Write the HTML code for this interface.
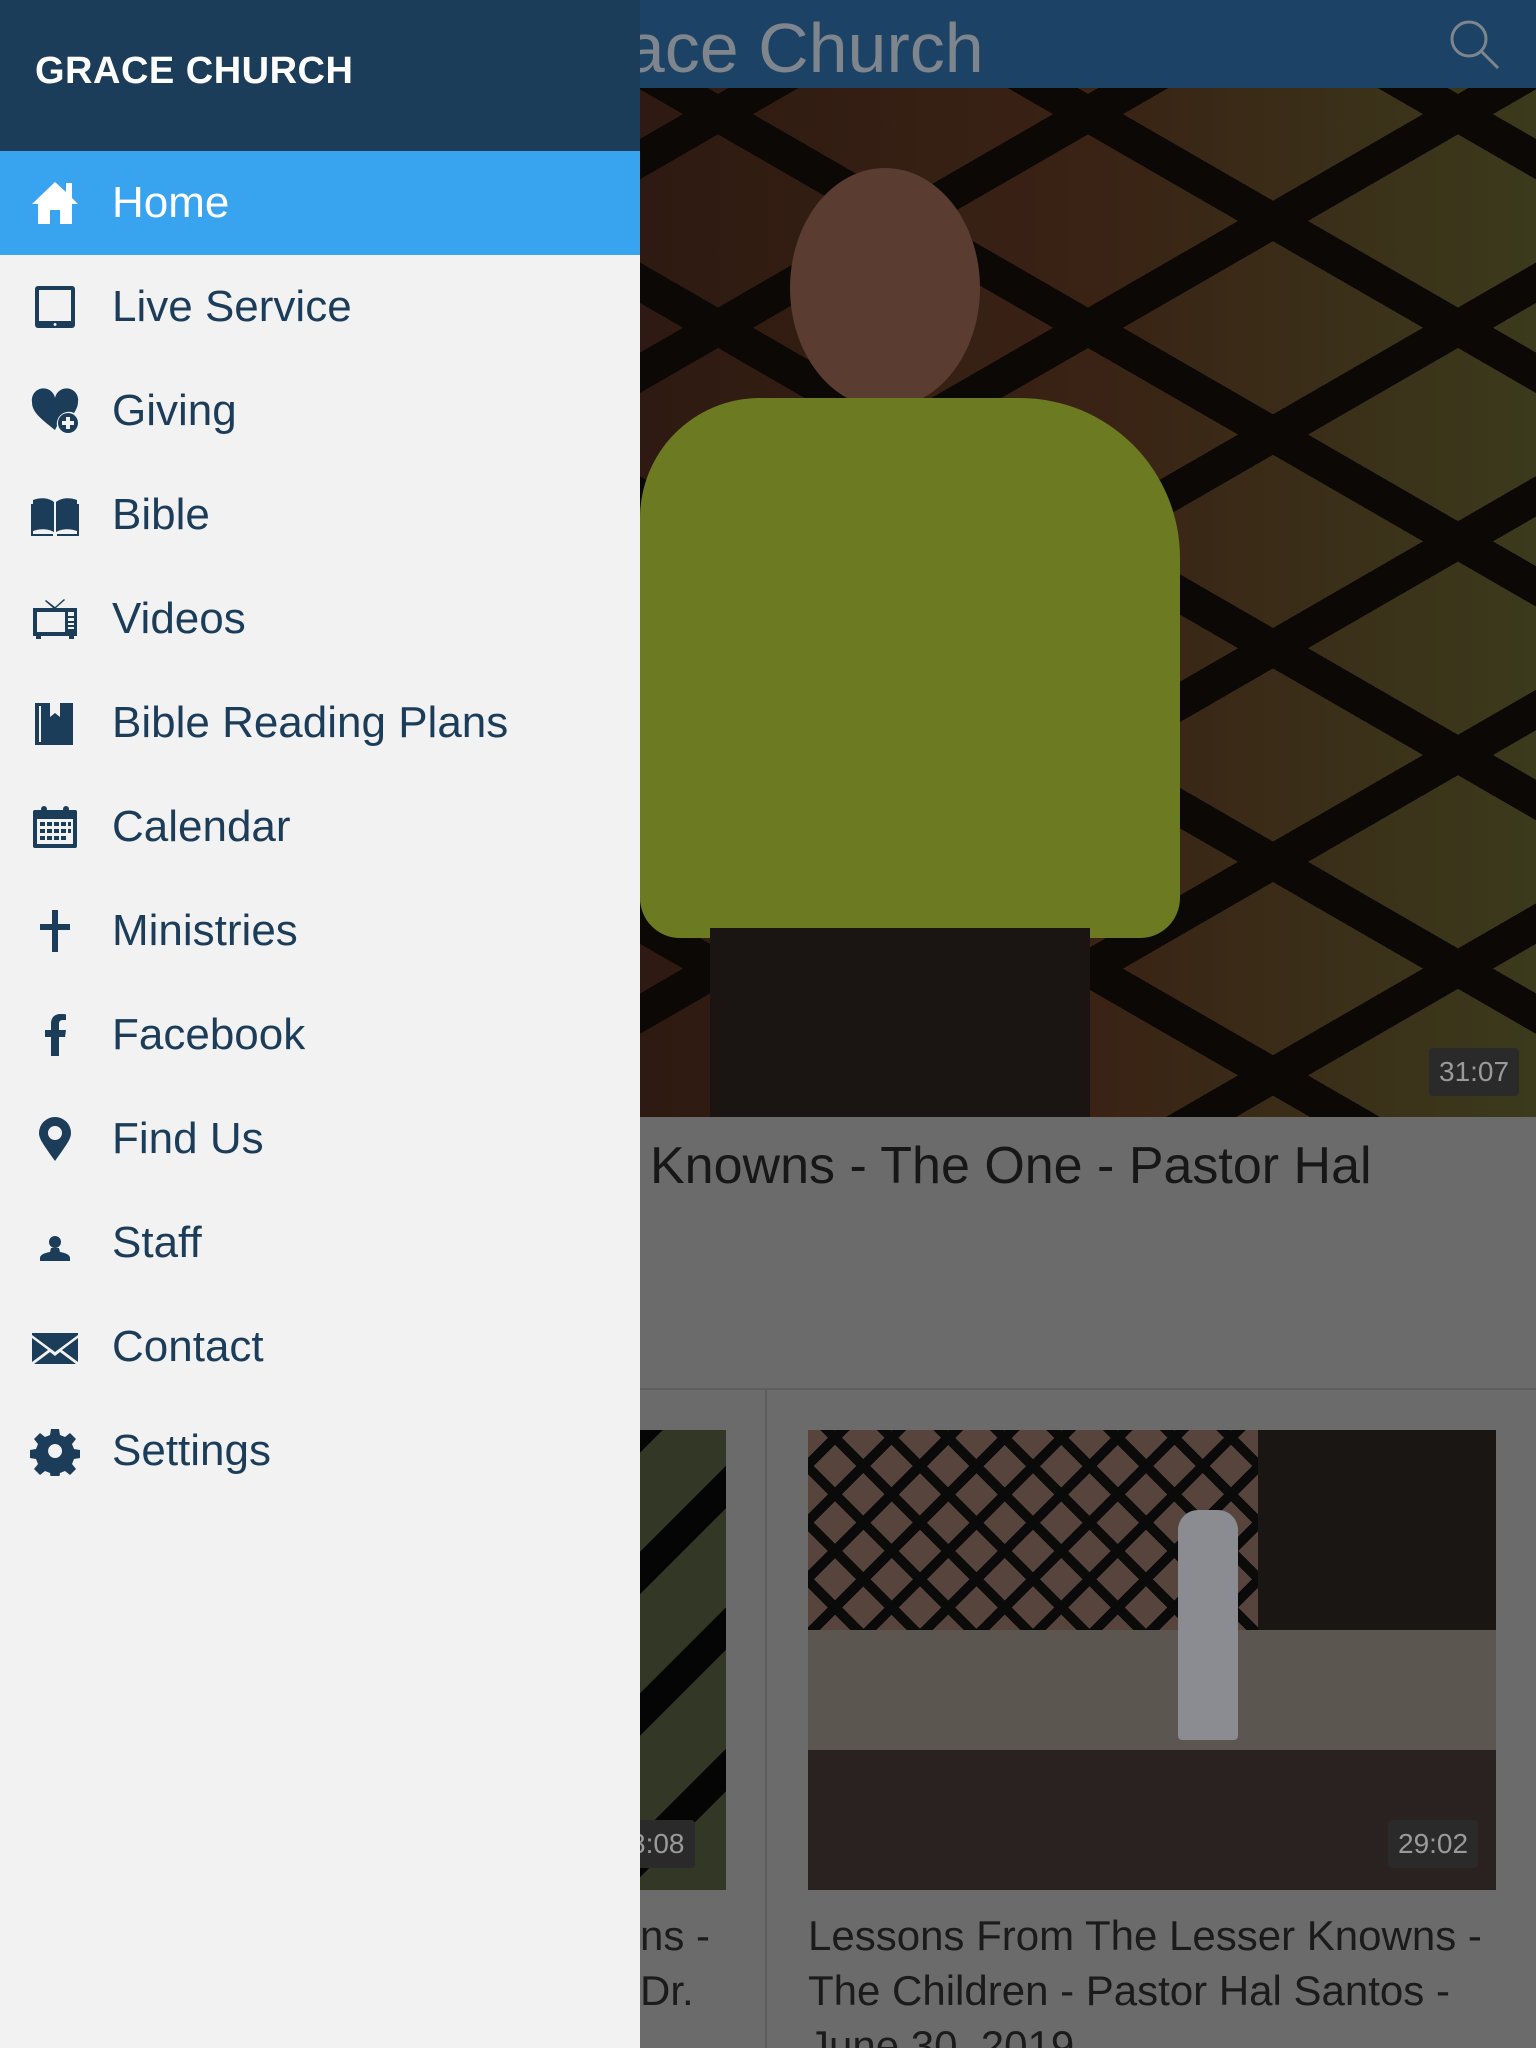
<!DOCTYPE html>
<html style="overflow:hidden;height:2048px"><head><meta charset="utf-8"><style>
*{margin:0;padding:0;box-sizing:border-box}
html,body{width:1536px;height:2048px;overflow:hidden}
body{background:#6b6b6b;font-family:"Liberation Sans",sans-serif;position:relative}
#wrap{position:absolute;left:0;top:0;width:1536px;height:2048px;overflow:hidden}
.topbar{position:absolute;left:0;top:0;width:1536px;height:88px;background:#1c4266}
.topbar .t{position:absolute;left:548px;top:8px;font-size:70px;color:#7e858c;white-space:nowrap}
.video{position:absolute;left:640px;top:88px;width:896px;height:1029px;overflow:hidden;
background:
 repeating-linear-gradient(30deg,transparent 0 150px,#0c0806 150px 185px),
 repeating-linear-gradient(-30deg,transparent 0 150px,#0c0806 150px 185px),
 linear-gradient(90deg,#2e1a12,#3a2214 50%,#3b3a1c);}
.shirt{position:absolute;left:0;top:310px;width:540px;height:540px;background:#6c7a22;border-radius:120px 160px 40px 40px}
.pants{position:absolute;left:70px;top:840px;width:380px;height:200px;background:#1a1512}
.head{position:absolute;left:150px;top:80px;width:190px;height:240px;background:#5a3c30;border-radius:50%}
.badge{position:absolute;background:#2a2a2a;color:#9a9a9a;font-size:28px;padding:8px 10px;border-radius:4px}
.h2{position:absolute;left:650px;top:1136px;font-size:52px;color:#171717;white-space:nowrap}
.hr{position:absolute;left:640px;top:1388px;width:896px;height:2px;background:#5e5e5e}
.vr{position:absolute;left:765px;top:1390px;width:2px;height:660px;background:#5e5e5e}
.thumbL{position:absolute;left:640px;top:1430px;width:86px;height:460px;
background:repeating-linear-gradient(-45deg,#333826 0 70px,#050505 70px 100px)}
.thumbR{position:absolute;left:808px;top:1430px;width:688px;height:460px;overflow:hidden;background:#1a1614}
.cap{position:absolute;font-size:42px;color:#1b1b1b;line-height:55px;white-space:nowrap}
.drawer{position:absolute;left:0;top:0;width:640px;height:2048px;background:#f2f2f2}
.dh{height:151px;background:#1c3d5a;color:#fff;font-weight:bold;font-size:38px;padding:50px 0 0 35px;letter-spacing:0.5px}
.item{height:104px;display:flex;align-items:center;color:#1c3d5a;font-size:44px}
.item.act{background:#38a3ee;color:#fff}
.ic{width:112px;display:flex;justify-content:center;padding-right:3px}
.ic svg{width:50px;height:50px;fill:currentColor}
</style></head><body><div id="wrap">
<div class="topbar"><div class="t">Grace Church</div>
<svg style="position:absolute;left:1448px;top:18px" width="52" height="52" viewBox="0 0 52 52" fill="none" stroke="#7e858c" stroke-width="3"><circle cx="21" cy="21" r="17"/><line x1="33" y1="33" x2="50" y2="50"/></svg></div>
<div class="video"><div class="head"></div><div class="shirt"></div><div class="pants"></div>
<div class="badge" style="left:789px;top:960px">31:07</div></div>
<div class="h2">Knowns - The One - Pastor Hal</div>
<div class="hr"></div><div class="vr"></div>
<div class="thumbL"><div class="badge" style="left:-20px;top:390px">8:08</div></div>
<div class="thumbR">
<div style="position:absolute;left:0;top:0;width:450px;height:200px;background:repeating-linear-gradient(45deg,#5e4a42 0 30px,#0a0a0a 30px 40px),#5a4a40;opacity:.9"></div>
<div style="position:absolute;left:0;top:0;width:450px;height:200px;background:repeating-linear-gradient(-45deg,transparent 0 30px,#0a0a0a 30px 40px)"></div>
<div style="position:absolute;left:0;top:200px;width:688px;height:120px;background:#5b5650"></div>
<div style="position:absolute;left:0;top:320px;width:688px;height:140px;background:#2a2220"></div>
<div style="position:absolute;left:370px;top:80px;width:60px;height:230px;background:#8a8c92;border-radius:20px 20px 4px 4px"></div>
<div class="badge" style="left:580px;top:390px">29:02</div></div>
<div class="cap" style="left:640px;top:1908px">ns -<br>Dr.</div>
<div class="cap" style="left:808px;top:1908px">Lessons From The Lesser Knowns -<br>The Children - Pastor Hal Santos -<br>June 30, 2019</div>

<div class="drawer">
<div class="dh">GRACE CHURCH</div>
<div class="item act"><div class="ic"><svg viewBox="0 0 50 50"><path d="M25 4 L2 26 H8 V46 H20 V32 H30 V46 H42 V26 H48 L42 20 V5 H36 V14 Z"/></svg></div>Home</div>
<div class="item"><div class="ic"><svg viewBox="0 0 50 50"><path d="M8 4h34a3 3 0 0 1 3 3v36a3 3 0 0 1-3 3H8a3 3 0 0 1-3-3V7a3 3 0 0 1 3-3zM9 8v31h32V8zM25 41a1.5 1.5 0 1 0 .1 0z" fill-rule="evenodd"/></svg></div>Live Service</div>
<div class="item"><div class="ic"><svg viewBox="0 0 50 50"><path d="M25 44 C10 32 2 26 2 16 A11 11 0 0 1 25 12 A11 11 0 0 1 48 16 C48 20 46 24 44 27 A12 12 0 0 0 27 40Z"/><circle cx="38" cy="37" r="10"/><path d="M36 31h4v4h4v4h-4v4h-4v-4h-4v-4h4z" fill="#f2f2f2"/></svg></div>Giving</div>
<div class="item"><div class="ic"><svg viewBox="0 0 50 50"><path d="M3 10c8-3 16-2 21 2v30c-5-3-13-4-21-1zM47 10c-8-3-16-2-21 2v30c5-3 13-4 21-1zM1 14h2v30h20v2H1zM49 14h-2v30H27v2h22z"/></svg></div>Bible</div>
<div class="item"><div class="ic"><svg viewBox="0 0 50 50"><path d="M3 14h44v28H3zM7 18v20h28V18zM38 18h6v4h-6zM38 24h6v3h-6zM38 29h6v2h-6zM38 33h6v2h-6zM16 6l9 7 9-8 1 1-9 8h-3L15 7zM6 42h5v3H6zM39 42h5v3h-5z" fill-rule="evenodd"/></svg></div>Videos</div>
<div class="item"><div class="ic"><svg viewBox="0 0 50 50"><path d="M5 5h38v42H5zM9 8v36h2V8zM20 5v14l5-4 5 4V5z" fill-rule="evenodd"/></svg></div>Bible Reading Plans</div>
<div class="item"><div class="ic"><svg viewBox="0 0 50 50"><path d="M5 8h40a2 2 0 0 1 2 2v34a2 2 0 0 1-2 2H5a2 2 0 0 1-2-2V10a2 2 0 0 1 2-2zM7 17v25h36V17z" fill-rule="evenodd"/><circle cx="14" cy="7" r="3"/><circle cx="36" cy="7" r="3"/><path d="M10 20h5v4h-5zM17 20h5v4h-5zM24 20h5v4h-5zM31 20h5v4h-5zM10 27h5v4h-5zM17 27h5v4h-5zM24 27h5v4h-5zM31 27h5v4h-5zM10 34h5v4h-5zM17 34h5v4h-5zM24 34h5v4h-5zM31 34h5v4h-5zM38 20h3v4h-3zM38 27h3v4h-3z"/></svg></div>Calendar</div>
<div class="item"><div class="ic"><svg viewBox="0 0 50 50"><path d="M22 4h6v14h12v6H28v22h-6V24H10v-6h12z"/></svg></div>Ministries</div>
<div class="item"><div class="ic"><svg viewBox="0 0 50 50"><path d="M21 46V27h-6v-7h6v-6c0-7 4-10 10-10 3 0 5 .3 5 .3V10h-3c-3 0-4 1.5-4 4v6h7l-1 7h-6v19z"/></svg></div>Facebook</div>
<div class="item"><div class="ic"><svg viewBox="0 0 50 50"><path d="M25 3a16 16 0 0 0-16 16c0 6 4 11 16 28 12-17 16-22 16-28A16 16 0 0 0 25 3zm0 9a7 7 0 1 1 0 14 7 7 0 0 1 0-14z" fill-rule="evenodd"/></svg></div>Find Us</div>
<div class="item"><div class="ic"><svg viewBox="0 0 50 50"><circle cx="25" cy="24" r="6"/><path d="M21 30h8l1 4c6 1 10 3 10 6v3H10v-3c0-3 4-5 10-6z"/></svg></div>Staff</div>
<div class="item"><div class="ic"><svg viewBox="0 0 50 50"><path d="M2 11h46v2L25 30 2 13zM2 16l16 12L2 40zM48 16L32 28l16 12zM20 30l5 4 5-4 16 12H4z"/></svg></div>Contact</div>
<div class="item"><div class="ic"><svg viewBox="0 0 50 50"><path d="M21 3h8l1 6 5 2 5-4 6 6-4 5 2 5 6 1v8l-6 1-2 5 4 5-6 6-5-4-5 2-1 6h-8l-1-6-5-2-5 4-6-6 4-5-2-5-6-1v-8l6-1 2-5-4-5 6-6 5 4 5-2zM25 18a7 7 0 1 0 .1 0z" fill-rule="evenodd"/></svg></div>Settings</div>
</div>
</div></body></html>
